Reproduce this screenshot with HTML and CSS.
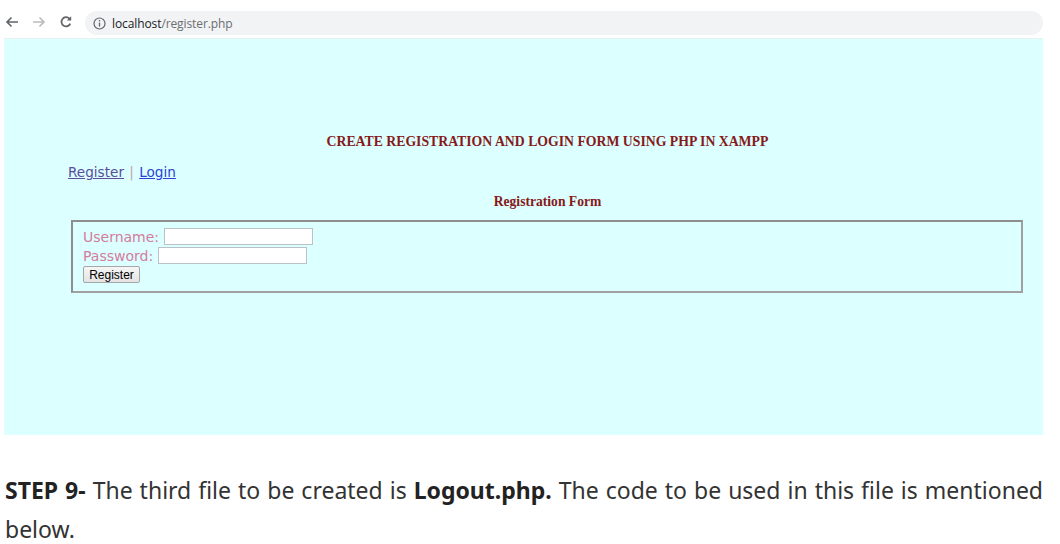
FILE: index.html
```html
<!DOCTYPE html>
<html lang="en">
<head>
<meta charset="utf-8">
<title>localhost/register.php</title>
<link rel="stylesheet" href="styles.css">
</head>
<body>
<div class="shot">
  <div class="toolbar">
    <svg class="nav-icon" width="14" height="14" viewBox="0 0 14 14"><path d="M13 7H2M6.5 2.5L2 7l4.5 4.5" fill="none" stroke="#5f6368" stroke-width="1.6"/></svg>
    <svg class="nav-icon fwd" width="14" height="14" viewBox="0 0 14 14"><path d="M1 7h11M7.5 2.5L12 7l-4.5 4.5" fill="none" stroke="#b8babd" stroke-width="1.6"/></svg>
    <svg class="nav-icon reload" width="14" height="14" viewBox="0 0 14 14"><path d="M11.3 8.6A4.6 4.6 0 1 1 10.4 3.6" fill="none" stroke="#5f6368" stroke-width="1.7"/><path d="M12.2 1.2v4.4H7.8z" fill="#5f6368"/></svg>
    <div class="omnibox">
      <svg width="13" height="13" viewBox="0 0 13 13"><circle cx="6.5" cy="6.5" r="5.5" fill="none" stroke="#5f6368" stroke-width="1.2"/><path d="M6.5 5.6v3.9" stroke="#5f6368" stroke-width="1.3"/><circle cx="6.5" cy="3.8" r="0.8" fill="#5f6368"/></svg>
      <span class="url"><span class="host">localhost</span>/register.php</span>
    </div>
  </div>
  <div class="page">
    <div class="content">
      <h1 class="title">CREATE REGISTRATION AND LOGIN FORM USING PHP IN XAMPP</h1>
      <div class="links"><a class="visited" href="#">Register</a> <span class="sep">|</span> <a href="#">Login</a></div>
      <h2 class="subtitle">Registration Form</h2>
      <fieldset class="form">
        <div class="row"><label>Username:</label> <input type="text"></div>
        <div class="row"><label>Password:</label> <input type="password"></div>
        <button type="button">Register</button>
      </fieldset>
    </div>
  </div>
</div>
<p class="article"><b>STEP 9-</b> The third file to be created is <b>Logout.php.</b> The code to be used in this file is mentioned below.</p>
</body>
</html>
```
FILE: styles.css
```css
html { overflow: hidden; }
body { margin: 0; background: #fff; font-family: "Noto Sans", "Open Sans", sans-serif; }
.shot { width: 1039px; padding-left: 4px; }
.toolbar { height: 38px; display: flex; align-items: flex-start; }
.nav-icon { margin-left: 1px; margin-top: 15px; }
.fwd { margin-left: 13px; }
.reload { margin-left: 13px; }
.omnibox { margin-left: 12px; flex: 1; height: 24px; margin-top: 11px; border-radius: 12px; background: #f1f3f4; display: flex; align-items: center; padding-left: 8px; }
.omnibox svg { margin-right: 6px; }
.url { font-family: "Open Sans", "Noto Sans", sans-serif; font-size: 12px; color: #6b6e72; letter-spacing: -0.1px; }
.host { color: #202124; }
.page { background: #dcffff; height: 397px; border-top: 1px solid #e6f2f2; box-sizing: border-box; }
.content { width: 959px; margin-left: 64px; padding-top: 95px; }
.title { margin: 0; text-align: center; font-family: "Liberation Serif", serif; font-weight: bold; font-size: 13.75px; line-height: 16px; color: #861a1a; }
.links { margin-top: 14px; font-family: "DejaVu Sans", sans-serif; font-size: 13.6px; line-height: 17px; }
.links a { color: #2b3fd4; }
.links a.visited { color: #5b4e9b; }
.sep { color: #c9a3ab; margin: 0 1px; }
.subtitle { margin: 13px 0 0; text-align: center; font-family: "Liberation Serif", serif; font-weight: bold; font-size: 13.6px; line-height: 16px; color: #861a1a; }
.form { margin: 10px 4px 0 3px; border: 2px solid #8e8e8e; border-color: #8e8e8e #a0a0a0 #a0a0a0 #8e8e8e; padding: 5px 10px 0 10px; height: 73px; box-sizing: border-box; }
.row { display: flex; align-items: center; height: 19px; }
.row label { font-family: "DejaVu Sans", sans-serif; font-size: 14px; color: #d47c9c; margin-right: 5px; }
.row input { width: 149px; height: 17px; box-sizing: border-box; border: 1px solid #b9c2c4; background: #fff; padding: 0; margin: 0; }
.form button { display: block; margin-top: 1px; height: 17px; width: 57px; padding: 0; font-family: "Liberation Sans", sans-serif; font-size: 12px; color: #000; background: linear-gradient(#f6f6f6, #e4e4e4); border: 1px solid #a6a6a6; border-radius: 2px; }
.article { margin: 36px 17px 0 5px; font-size: 23px; line-height: 39px; text-align: justify; color: #333; }
.article b { color: #222; }
```
